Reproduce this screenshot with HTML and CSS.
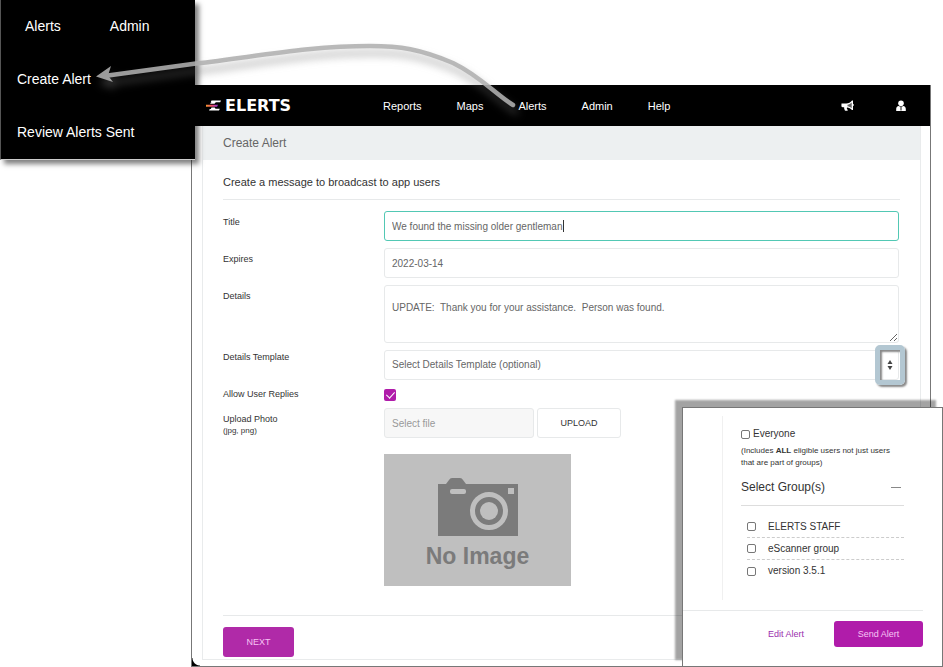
FILE: index.html
```html
<!DOCTYPE html>
<html lang="en">
<head>
<meta charset="utf-8">
<meta name="viewport" content="width=device-width, initial-scale=1">
<title>ELERTS - Create Alert</title>
<link rel="stylesheet" href="styles.css">
</head>
<body>
<div class="window">
  <header class="topbar">
    <a class="brand" href="#">
      <svg class="brand-mark" viewBox="0 0 15 11" aria-hidden="true">
        <defs>
          <linearGradient id="flame" x1="0" x2="1" y1="0" y2="0">
            <stop offset="0" stop-color="#f79a2d"/>
            <stop offset=".5" stop-color="#f0486a"/>
            <stop offset="1" stop-color="#8a35d8"/>
          </linearGradient>
        </defs>
        <path d="M5.500 .6H15l-.8 1.600H9.800L8.500 3.800H3.900L5.600 2.400H4.600z" fill="#fff"/>
        <path d="M0 4.700h12l-.9 2H0z" fill="url(#flame)"/>
        <path d="M5.500 7.500h3.200l.8 1.200h4.300L13 10.500H3l.8-1.600h1z" fill="#fff"/>
      </svg>
      <span>ELERTS</span>
    </a>
    <nav class="nav">
      <a href="#">Reports</a>
      <a href="#">Maps</a>
      <a href="#">Alerts</a>
      <a href="#">Admin</a>
      <a href="#">Help</a>
    </nav>
    <div class="tools">
      <a href="#" aria-label="Announcements">
        <svg width="13" height="12" viewBox="0 0 13 12" aria-hidden="true">
          <path d="M.5 3.500h4.700C7.600 3.500 9.600 2.200 11 .4h1v3.400c.6.2.8.6.8 1.100s-.2.900-.8 1.100V10h-1C9.600 8.500 7.900 7.600 6 7.400c-.5.9.1 1.700.9 2.500-.4 1-2.300 1-3 .5-.5-1-1-2-.7-3.100H1.500L.4 6.500z" fill="#fff"/>
          <path d="M6.500 4.800C8.200 4.500 9.500 3.700 10.700 2.600v5.600C9.500 7.200 8.200 6.500 6.500 6.200z" fill="#666"/>
        </svg>
      </a>
      <a href="#" aria-label="Account">
        <svg width="10" height="12" viewBox="0 0 10 12" aria-hidden="true">
          <circle cx="5" cy="3.300" r="2.800" fill="#fff"/>
          <path d="M.2 11V9c0-1.700 1-2.700 2.400-3 1.500 1 3.300 1 4.800 0C8.800 6.300 9.800 7.300 9.800 9v2z" fill="#fff"/>
          <path d="M4 7h2v3.500H4z" fill="#888"/>
        </svg>
      </a>
    </div>
  </header>

  <main class="panel">
    <h1 class="panel-title">Create Alert</h1>
    <form class="panel-body">
      <p class="intro">Create a message to broadcast to app users</p>
      <div class="fields">
        <label class="label" for="title">Title</label>
        <div class="cell">
          <input class="field field-active" id="title" type="text" value="We found the missing older gentleman">
          <span class="caret"></span>
        </div>

        <label class="label" for="expires">Expires</label>
        <input class="field" id="expires" type="text" value="2022-03-14">

        <label class="label" for="details">Details</label>
        <textarea class="field field-area" id="details">UPDATE:  Thank you for your assistance.  Person was found.</textarea>

        <label class="label label-tight" for="template">Details Template</label>
        <div class="cell">
          <select class="field" id="template">
            <option>Select Details Template (optional)</option>
          </select>
          <span class="spotlight">
            <svg width="6" height="10" viewBox="0 0 6 10" aria-hidden="true">
              <path d="M3 0l2.500 4h-5zM3 10L.5 6h5z" fill="#444"/>
            </svg>
          </span>
        </div>

        <label class="label label-tight" for="replies">Allow User Replies</label>
        <input class="tick" id="replies" type="checkbox" checked>

        <label class="label" for="photo">Upload Photo<small>(jpg, png)</small></label>
        <div>
          <div class="upload">
            <input class="field field-file" id="photo" type="text" placeholder="Select file">
            <button class="button button-plain" type="button">UPLOAD</button>
          </div>
          <div class="placeholder">
            <svg width="80" height="58" viewBox="0 0 80 58" aria-hidden="true">
              <path d="M0 6h8l3-4q1-2 3-2h8q2 0 3 2l3 4h52v52H0z" fill="#7b7b7b"/>
              <rect x="12" y="11" width="16" height="5" rx="2" fill="#bfbfbf"/>
              <rect x="70" y="10" width="6" height="6" fill="#bfbfbf"/>
              <circle cx="51" cy="33" r="16.500" fill="none" stroke="#bfbfbf" stroke-width="5"/>
              <circle cx="51" cy="33" r="9" fill="#bfbfbf"/>
            </svg>
            <span>No Image</span>
          </div>
        </div>
      </div>
      <div class="actions">
        <button class="button button-next" type="button">NEXT</button>
      </div>
    </form>
  </main>
</div>

<nav class="menu">
  <div class="menu-row menu-tabs">
    <a href="#">Alerts</a>
    <a href="#">Admin</a>
  </div>
  <a class="menu-row" href="#">Create Alert</a>
  <a class="menu-row" href="#">Review Alerts Sent</a>
</nav>

<svg class="arrow" width="540" height="130" viewBox="0 0 540 130" aria-hidden="true">
  <g opacity=".88">
    <path d="M513 105C494 93 480 76 453 63C420 49 400 46 370 46C310 46 260 56 196 63.500L108 75.500" fill="none" stroke="#b0b0b0" stroke-width="4.500" stroke-linecap="round"/>
    <path d="M96 76.500L111 66l-3 9.500 5 6.500z" fill="#b0b0b0"/>
  </g>
</svg>

<aside class="groups">
  <div class="groups-body">
    <div class="everyone">
      <input class="box" id="everyone" type="checkbox">
      <label for="everyone">Everyone</label>
    </div>
    <p class="note">(Includes <b>ALL</b> eligible users not just users that are part of groups)</p>
    <div class="groups-head">
      <h2>Select Group(s)</h2>
      <button class="collapse" type="button" aria-label="Collapse"></button>
    </div>
    <ul class="group-list">
      <li><input class="box" id="g1" type="checkbox"><label for="g1">ELERTS STAFF</label></li>
      <li><input class="box" id="g2" type="checkbox"><label for="g2">eScanner group</label></li>
      <li><input class="box" id="g3" type="checkbox"><label for="g3">version 3.5.1</label></li>
    </ul>
  </div>
  <div class="groups-actions">
    <a href="#">Edit Alert</a>
    <button class="button button-send" type="button">Send Alert</button>
  </div>
</aside>
</body>
</html>
```
FILE: styles.css
```css
* {
  box-sizing: border-box;
}

body {
  position: relative;
  margin: 0;
  min-height: 100vh;
  background: #fff;
  color: #333;
  font-family: "Liberation Sans", Arial, sans-serif;
  font-size: 10px;
  line-height: 12px;
}

a {
  color: inherit;
  text-decoration: none;
}

input,
select,
textarea,
button {
  margin: 0;
  font: inherit;
}

/* Main window */
.window {
  margin: 0 12px 0 191px;
  padding-bottom: 6px;
  border: 1px solid #777;
  border-top: 0;
  background: radial-gradient(circle at 100% 0, transparent 7px, #000 8px) left bottom / 8px 8px no-repeat #fff;
}

body::before {
  content: "";
  display: block;
  height: 85px;
}

.topbar {
  display: flex;
  align-items: center;
  height: 41px;
  padding: 0 24px 0 14px;
  background: #000;
  color: #fff;
  font-size: 11px;
}

.brand {
  display: flex;
  align-items: center;
  gap: 4px;
  width: 177px;
  font-family: "DejaVu Sans", sans-serif;
  font-size: 16px;
  font-weight: 700;
}

.brand-mark {
  width: 15px;
  height: 11px;
}

.nav {
  display: flex;
  gap: 35px;
}

.tools {
  display: flex;
  align-items: center;
  gap: 42px;
  margin-left: auto;
}

.tools svg {
  display: block;
}

.panel {
  margin: 0 9px 0 10px;
  border: 1px solid #e9ebec;
  border-top: 0;
}

.panel-title {
  margin: 0;
  padding: 0 20px;
  background: #edf0f1;
  color: #666;
  font-size: 12px;
  font-weight: 400;
  line-height: 34px;
}

.panel-body {
  padding: 0 20px 2px;
}

.intro {
  margin: 0 0 11px;
  padding: 15px 0 10px;
  border-bottom: 1px solid #e7e9ea;
  font-size: 11px;
  line-height: 14px;
}

.fields {
  display: grid;
  grid-template-columns: 161px 1fr;
  gap: 7px 0;
  padding-right: 1px;
}

.label {
  padding-top: 5px;
  font-size: 9px;
}

.label-tight {
  padding-top: 1px;
}

.label small {
  display: block;
  font-size: 8px;
}

.cell {
  position: relative;
}

.field {
  display: block;
  width: 100%;
  height: 30px;
  padding: 0 7px;
  border: 1px solid #e7e9ea;
  border-radius: 3px;
  outline: 0;
  background: #fff;
  color: #666;
  appearance: none;
}

.field-active {
  border-color: #52c8b4;
}

.caret {
  position: absolute;
  top: 9px;
  left: 179px;
  width: 1px;
  height: 12px;
  background: #333;
}

.field-area {
  height: 58px;
  padding: 16px 7px;
  resize: vertical;
}

.spotlight {
  position: absolute;
  top: -5px;
  right: -6px;
  display: grid;
  place-items: center;
  width: 30px;
  height: 40px;
  border: 5px solid #b3c7d2;
  border-radius: 5px;
  box-shadow: 2px 2px 2px #888, inset 2px 2px 2px #888;
  pointer-events: none;
}

.tick {
  width: 12px;
  height: 12px;
  margin: 2px 0 0;
  border-radius: 2px;
  appearance: none;
  background: #b01caa;
}

.tick:checked::before {
  content: "";
  display: block;
  width: 4px;
  height: 7px;
  margin: 1px 4px;
  border: solid #fff;
  border-width: 0 1px 1px 0;
  transform: rotate(42deg);
}

.upload {
  display: flex;
  gap: 3px;
  margin-bottom: 16px;
}

.field-file {
  width: 150px;
  background: #f7f7f7;
}

.field-file::placeholder {
  color: #999;
}

.button {
  height: 30px;
  border: 0;
  border-radius: 3px;
  font-size: 9px;
}

.button-plain {
  width: 84px;
  border: 1px solid #e7e9ea;
  background: #fff;
  color: #333;
}

.placeholder {
  display: flex;
  flex-direction: column;
  align-items: center;
  gap: 6px;
  width: 187px;
  height: 132px;
  padding-top: 24px;
  background: #bfbfbf;
  color: #7b7b7b;
  font-size: 23px;
  font-weight: 700;
  line-height: 28px;
}

.actions {
  margin-top: 29px;
  padding-top: 11px;
  border-top: 1px solid #e7e9ea;
}

.button-next {
  width: 71px;
  background: #b02aa8;
  color: #f7c4f4;
}

/* Enlarged menu callout */
.menu {
  position: absolute;
  top: 0;
  left: 0;
  width: 195px;
  border-bottom: 1px solid #ccc;
  border-left: 1px solid #555;
  background: #000;
  box-shadow: 4px 4px 5px rgb(0 0 0 / 50%);
  color: #fff;
  font-size: 14px;
}

.menu-row {
  display: block;
  padding-left: 16px;
  line-height: 53px;
}

.menu-tabs {
  display: flex;
  gap: 49px;
  padding-left: 24px;
}

.arrow {
  position: absolute;
  top: 0;
  left: 0;
  filter: drop-shadow(3px 7px 4px rgb(110 110 110 / 60%));
  pointer-events: none;
}

/* Group picker callout */
.groups {
  position: absolute;
  right: 0;
  bottom: 0;
  width: 261px;
  padding: 8px 19px 19px 0;
  border: 1px solid #777;
  background: #fff;
  box-shadow: -7px -7px 2px rgb(0 0 0 / 36%);
}

.groups-body {
  margin: 0 0 10px 39px;
  padding: 12px 0 18px 18px;
  border-left: 1px solid #f0f0f0;
}

.everyone {
  display: flex;
  align-items: center;
  gap: 3px;
}

.box {
  width: 9px;
  height: 9px;
  border: 1px solid #777;
  border-radius: 2px;
  appearance: none;
  background: #fff;
}

.note {
  width: 158px;
  margin: 5px 0 11px;
  font-size: 8px;
}

.groups-head {
  display: flex;
  align-items: center;
  justify-content: space-between;
  margin-right: 19px;
  padding: 0 3px 11px 0;
  border-bottom: 1px solid #ddd;
}

.groups-head h2 {
  margin: 0;
  font-size: 12px;
  font-weight: 400;
  line-height: 14px;
}

.collapse {
  width: 10px;
  height: 1px;
  padding: 0;
  border: 0;
  background: #888;
}

.group-list {
  margin: 10px 19px 0 6px;
  padding: 0;
  list-style: none;
}

.group-list li {
  display: flex;
  align-items: center;
  gap: 12px;
  height: 22px;
}

.group-list li:not(:last-child) {
  border-bottom: 1px dashed #ccc;
}

.groups-actions {
  display: flex;
  align-items: center;
  justify-content: flex-end;
  gap: 30px;
  padding-top: 10px;
  border-top: 1px solid #e7e9ea;
  color: #9b2fae;
  font-size: 9px;
}

.button-send {
  width: 89px;
  height: 26px;
  background: #b01caa;
  color: #f7c4f4;
}
```
